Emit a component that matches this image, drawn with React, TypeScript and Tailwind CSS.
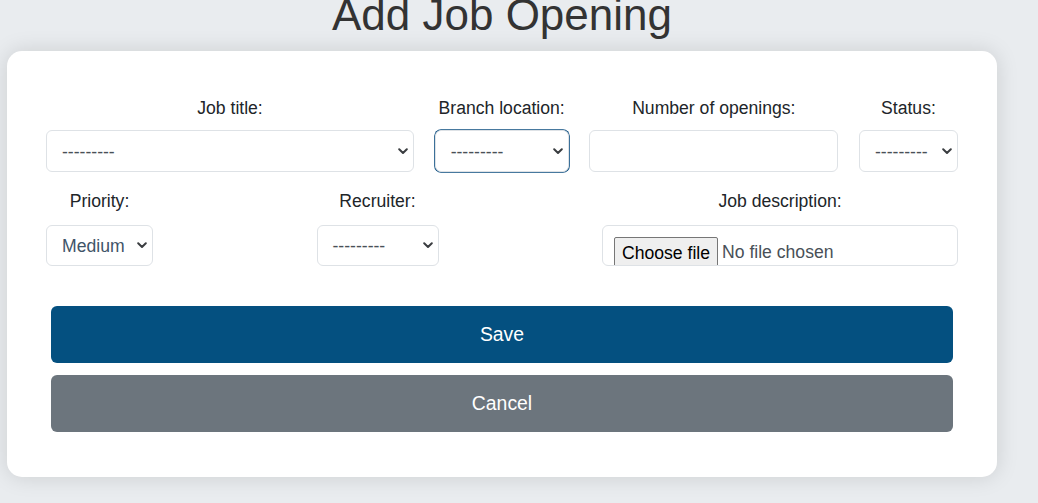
import React from 'react';

const labelCls = 'text-[17.6px] leading-[26.4px] text-[#212529] whitespace-nowrap';
const boxCls =
  'bg-white border border-[#dee2e6] rounded-[6px] text-[17.6px] text-[#495057] flex items-center';

function Chevron() {
  return (
    <svg width="10" height="7" viewBox="0 0 10 7" className="shrink-0">
      <path d="M1.2 1.3 L5 5 L8.8 1.3" fill="none" stroke="#3a3d40" strokeWidth="2" strokeLinecap="round" strokeLinejoin="round" />
    </svg>
  );
}

function FakeSelect({
  width,
  height = 42,
  value,
  focused,
}: {
  width: number;
  height?: number;
  value: string;
  focused?: boolean;
}) {
  return (
    <div
      className={
        boxCls +
        ' pl-[15px] pr-[5px] justify-between ' +
        (focused ? 'border-[#0b4d80] shadow-[0_0_0_0.8px_#0b4d80]' : '')
      }
      style={{ width, height }}
    >
      <span className={value === 'Medium' ? 'text-[#3f5468] pt-[2px]' : 'text-[#495057] pt-[2px]'}>{value}</span>
      <Chevron />
    </div>
  );
}

function Field({ label, gap = 9, children }: { label: string; gap?: number; children: React.ReactNode }) {
  return (
    <div className="flex flex-col items-center">
      <div className={labelCls} style={{ marginBottom: gap }}>
        {label}
      </div>
      {children}
    </div>
  );
}

export default function App() {
  return (
    <div
      className="min-h-[503px] bg-[#e9ecef] overflow-hidden"
      style={{ fontFamily: '"Liberation Sans", Arial, sans-serif' }}
    >
      <div className="ml-[7px] w-[990px]">
        <h1 className="text-center text-[44px] leading-[52.8px] text-[#333333] -mt-[11px] mb-[9px]">
          Add Job Opening
        </h1>
        <div className="bg-white rounded-[15px] shadow-[0_0_22px_rgba(0,0,0,0.13)] px-[39px] pt-[44px] pb-[45px]">
          <div className="flex justify-between">
            <Field label="Job title:">
              <FakeSelect width={368} value="---------" />
            </Field>
            <Field label="Branch location:">
              <FakeSelect width={134} value="---------" focused />
            </Field>
            <Field label="Number of openings:">
              <div className={boxCls} style={{ width: 249, height: 42 }} />
            </Field>
            <Field label="Status:">
              <FakeSelect width={99} value="---------" />
            </Field>
          </div>

          <div className="flex justify-between mt-[16px]">
            <Field label="Priority:" gap={10}>
              <FakeSelect width={107} height={41} value="Medium" />
            </Field>
            <Field label="Recruiter:" gap={10}>
              <FakeSelect width={122} height={41} value="---------" />
            </Field>
            <Field label="Job description:" gap={10}>
              <div className="h-[41px] w-[356px] bg-white border border-[#dee2e6] rounded-[6px] overflow-hidden pl-[11px] pt-[11px] flex items-start text-[17.6px]">
                <span className="bg-[#efefef] border border-[#767676] rounded-[2px] px-[7px] pt-[2px] h-[34px] leading-[26px] text-black whitespace-nowrap">
                  Choose file
                </span>
                <span className="ml-[4px] pt-[1px] leading-[28px] text-[#495057] whitespace-nowrap">No file chosen</span>
              </div>
            </Field>
          </div>

          <div className="px-[5px] mt-[40px] flex flex-col gap-[12px]">
            <button className="h-[57px] w-full rounded-[6px] bg-[#045080] text-white text-[19.4px]">
              Save
            </button>
            <button className="h-[57px] w-full rounded-[6px] bg-[#6c757d] text-white text-[19.4px]">
              Cancel
            </button>
          </div>
        </div>
      </div>
    </div>
  );
}
